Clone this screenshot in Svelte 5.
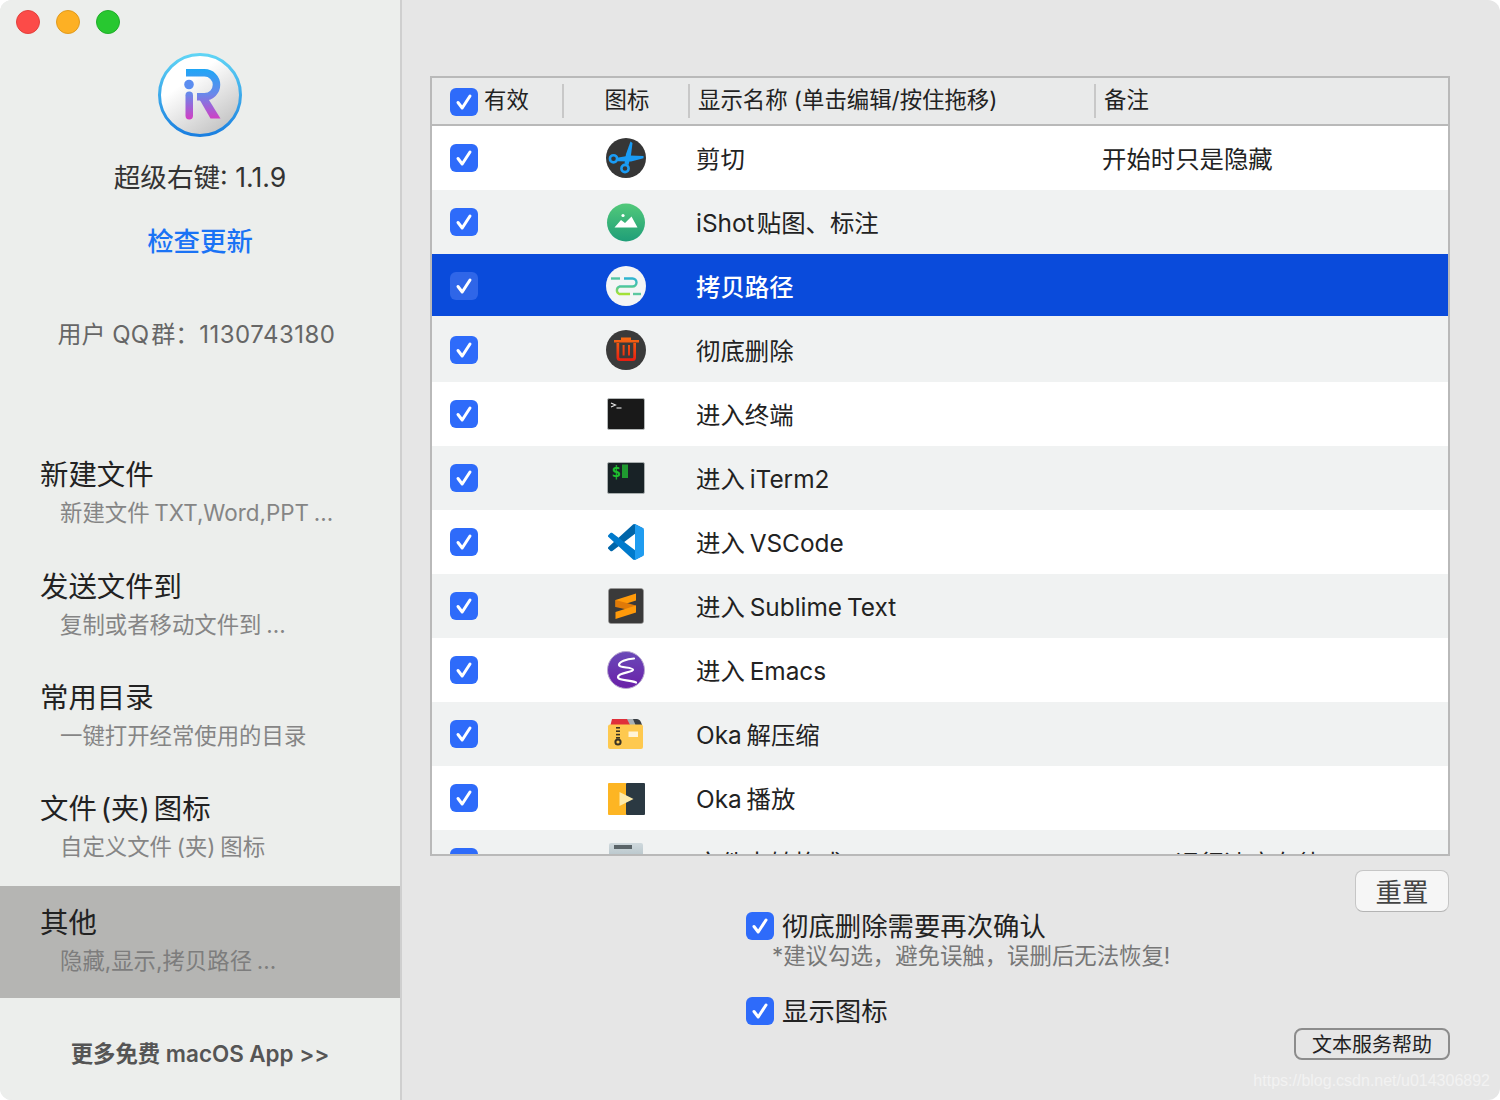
<script>
  const navItems = [
    { title: "新建文件", sub: "新建文件 TXT,Word,PPT ..." },
    { title: "发送文件到", sub: "复制或者移动文件到 ..." },
    { title: "常用目录", sub: "一键打开经常使用的目录" },
    { title: "文件 (夹) 图标", sub: "自定义文件 (夹) 图标" },
    { title: "其他", sub: "隐藏,显示,拷贝路径 ...", active: true },
  ];

  const rows = [
    { icon: "cut", name: "剪切", note: "开始时只是隐藏" },
    { icon: "ishot", name: "iShot\u200a贴图、标注", note: "" },
    { icon: "copypath", name: "拷贝路径", note: "", selected: true },
    { icon: "trash", name: "彻底删除", note: "" },
    { icon: "terminal", name: "进入终端", note: "" },
    { icon: "iterm", name: "进入 iTerm2", note: "" },
    { icon: "vscode", name: "进入 VSCode", note: "" },
    { icon: "sublime", name: "进入 Sublime Text", note: "" },
    { icon: "emacs", name: "进入 Emacs", note: "" },
    { icon: "okazip", name: "Oka 解压缩", note: "" },
    { icon: "okaplay", name: "Oka 播放", note: "" },
    { icon: "disk", name: "文件夹转格式", note: "　　　运行速度有待" },
  ];

  const confirmNote = "*建议勾选\uff0c避免误触\uff0c误删后无法恢复!";
</script>

{#snippet check()}
  <svg class="tick" viewBox="0 0 28 28" aria-hidden="true">
    <path d="M8 14.5 L12.2 20 L20 8" fill="none" stroke="#fff" stroke-width="3" stroke-linecap="round" stroke-linejoin="round" />
  </svg>
{/snippet}

{#snippet appIcon(name)}
  <svg class="app-icon" viewBox="0 0 40 40" aria-hidden="true">
    {#if name === "cut"}
      <circle cx="20" cy="20" r="20" fill="#363636" />
      <path d="M24.5 3.5 L26.5 5 L25 17 L22.5 27 L18.5 25.5 L20 16 Z" fill="#1a9cf5" />
      <path d="M37.5 18 L37.5 20.2 L25 23.5 L12 23.2 L11 19.8 L24 17.5 Z" fill="#1a9cf5" />
      <circle cx="7.5" cy="20.8" r="3.6" fill="none" stroke="#1a9cf5" stroke-width="2.6" />
      <circle cx="19" cy="30.5" r="3.6" fill="none" stroke="#1a9cf5" stroke-width="2.6" />
    {:else if name === "ishot"}
      <defs>
        <linearGradient id="ishot-g" x1="0" y1="0" x2="0" y2="1">
          <stop offset="0" stop-color="#52c97a" />
          <stop offset="1" stop-color="#1f9e78" />
        </linearGradient>
      </defs>
      <circle cx="20" cy="20.5" r="19" fill="url(#ishot-g)" />
      <circle cx="17" cy="13.5" r="1.6" fill="#fff" />
      <path d="M8.5 25.5 L15 18 L19 21 L25.5 14.5 L31.5 25.5 Z" fill="#fff" />
    {:else if name === "copypath"}
      <defs>
        <linearGradient id="path-g" x1="0" y1="0" x2="0" y2="1">
          <stop offset="0" stop-color="#2fb4d0" />
          <stop offset="0.5" stop-color="#4cc6a0" />
          <stop offset="1" stop-color="#a6e234" />
        </linearGradient>
      </defs>
      <circle cx="20" cy="20" r="20" fill="#f4f5f5" />
      <path d="M5 12.5 H14" stroke="#52c4a4" stroke-width="2.4" fill="none" />
      <path d="M18 12.5 H26.5 a4 4 0 0 1 0 8 H13.5 a4 4 0 0 0 0 7.5 H24" stroke="url(#path-g)" stroke-width="2.4" fill="none" />
      <path d="M27 28 H35" stroke="#5cc8a0" stroke-width="2.4" fill="none" />
    {:else if name === "trash"}
      <defs>
        <linearGradient id="trash-g" x1="0" y1="0" x2="0" y2="1">
          <stop offset="0" stop-color="#f56a12" />
          <stop offset="1" stop-color="#ea1c10" />
        </linearGradient>
      </defs>
      <circle cx="20" cy="20" r="20" fill="#3a3a3a" />
      <path fill="url(#trash-g)" d="M15 7.5 H25 V10 H33 V12.4 H8 V10 H15 Z M10.5 13 H13.2 V27 Q13.2 28.3 14.5 28.3 H26 Q27.3 28.3 27.3 27 V13 H30 V27.5 Q30 31 26.5 31 H14 Q10.5 31 10.5 27.5 Z M16.6 15 H18.6 V25.5 H16.6 Z M22 15 H24 V25.5 H22 Z" />
    {:else if name === "terminal"}
      <rect x="1.5" y="4.5" width="37" height="31" rx="1.5" fill="#191919" stroke="#b4b8b8" />
      <path d="M5 9 L9.5 11 L5 13" fill="none" stroke="#e8e8e8" stroke-width="1.1" />
      <path d="M10.5 14 H15.5" stroke="#e8e8e8" stroke-width="1.1" />
    {:else if name === "iterm"}
      <rect x="1.5" y="4.5" width="37" height="31" rx="1.5" fill="#182226" stroke="#a8aeae" />
      <text x="5.5" y="19" class="dollar">$</text>
      <rect x="16" y="6.5" width="6" height="13.5" fill="#1f9a30" />
    {:else if name === "vscode"}
      <g transform="translate(2 2) scale(0.36)">
        <path fill="#0065a9" d="M96.4614 10.7962L75.8569 0.875542C73.4719 -0.272773 70.6217 0.211611 68.75 2.08333L1.29858 63.5832C-0.515693 65.2373 -0.513607 68.0937 1.30308 69.7452L6.81272 74.754C8.29793 76.1042 10.5347 76.2036 12.1338 74.9905L93.3609 13.3699C96.086 11.3026 100 13.2462 100 16.6667V16.4275C100 14.0265 98.6246 11.8378 96.4614 10.7962Z" />
        <path fill="#007acc" d="M96.4614 89.2038L75.8569 99.1245C73.4719 100.273 70.6217 99.7884 68.75 97.9167L1.29858 36.4168C-0.515693 34.7627 -0.513607 31.9063 1.30308 30.2548L6.81272 25.246C8.29793 23.8958 10.5347 23.7964 12.1338 25.0095L93.3609 86.6301C96.086 88.6974 100 86.7538 100 83.3333V83.5725C100 85.9735 98.6246 88.1622 96.4614 89.2038Z" />
        <path fill="#1f9cf0" d="M75.8578 99.1263C73.4721 100.274 70.6219 99.7885 68.75 97.9166C71.0564 100.223 75 98.5895 75 95.3278V4.67213C75 1.41039 71.0564 -0.223106 68.75 2.08329C70.6219 0.211402 73.4721 -0.273666 75.8578 0.873633L96.4587 10.7807C98.6234 11.8217 100 14.0112 100 16.4132V83.5871C100 85.9891 98.6234 88.1786 96.4586 89.2196L75.8578 99.1263Z" />
      </g>
    {:else if name === "sublime"}
      <rect x="2.5" y="2.5" width="35" height="35" rx="2.5" fill="#3a3a3a" stroke="#9a9a9a" stroke-width="0.6" />
      <path d="M9.5 14 L30 7.5 V14.5 L9.5 21 Z" fill="#ff9a0a" />
      <path d="M9.5 21 L30 25.5 L30 19.5 L9.5 14 Z" fill="#e07a08" />
      <path d="M9.5 26 L30 19.5 V26.5 L9.5 33 Z" fill="#ff9a0a" />
    {:else if name === "emacs"}
      <defs>
        <linearGradient id="emacs-g" x1="0" y1="0" x2="0" y2="1">
          <stop offset="0" stop-color="#6a4ab8" />
          <stop offset="1" stop-color="#6a1fa8" />
        </linearGradient>
      </defs>
      <circle cx="20" cy="20" r="18.5" fill="url(#emacs-g)" stroke="#b8a8d0" stroke-width="1" />
      <path d="M28 8.5 C20 9 13 12 13 15 C13 18 27 17 27 19.8 C27 22.5 12 22.5 12 27 C12 31 24 29.5 30 32.5" fill="none" stroke="#fff" stroke-width="2.2" stroke-linecap="round" />
    {:else if name === "okazip"}
      <path d="M21 5 H31 Q34.5 5 36 11 H21 Z" fill="#3a3f44" />
      <path d="M20 5 H27 L29.5 11 H20 Z" fill="#a8b0b4" />
      <path d="M6 5 H21 L24 11 H4.5 Z" fill="#e0303a" />
      <rect x="2" y="10.5" width="35" height="24.5" rx="2" fill="#fec94f" />
      <g fill="#3c3424">
        <rect x="10" y="13" width="4" height="1.6" />
        <rect x="10" y="16.4" width="4" height="1.6" />
        <rect x="10" y="19.8" width="4" height="1.6" />
        <rect x="10" y="23" width="4" height="1.6" />
      </g>
      <circle cx="12" cy="28" r="2.6" fill="none" stroke="#3c3424" stroke-width="2" />
      <rect x="22.5" y="17.5" width="9.5" height="5.5" fill="#fff4d8" />
    {:else if name === "okaplay"}
      <rect x="2" y="5" width="18.5" height="32" rx="1" fill="#fdb523" />
      <rect x="20" y="5" width="19" height="32" rx="1" fill="#2b3942" />
      <path d="M13.5 14 L27.5 21 L13.5 28 Z" fill="#fde9a8" />
    {:else if name === "disk"}
      <defs>
        <linearGradient id="disk-g" x1="0" y1="0" x2="0" y2="1">
          <stop offset="0" stop-color="#cfd9dd" />
          <stop offset="1" stop-color="#8fa2aa" />
        </linearGradient>
      </defs>
      <rect x="3" y="1" width="34" height="38" rx="2" fill="url(#disk-g)" />
      <rect x="8" y="3" width="18" height="4" fill="#5a6468" />
    {/if}
  </svg>
{/snippet}

<div class="window">
  <aside class="sidebar">
    <div class="lights">
      <span class="light red"></span>
      <span class="light amber"></span>
      <span class="light green"></span>
    </div>

    <svg class="logo" viewBox="0 0 84 84" aria-label="超级右键">
      <defs>
        <linearGradient id="logo-ring" x1="0" y1="0" x2="0" y2="1">
          <stop offset="0" stop-color="#5fd4f5" />
          <stop offset="1" stop-color="#1a7fe0" />
        </linearGradient>
        <linearGradient id="logo-face" x1="0.2" y1="0.1" x2="0.8" y2="0.95">
          <stop offset="0.25" stop-color="#ffffff" />
          <stop offset="1" stop-color="#c2c2c2" />
        </linearGradient>
        <linearGradient id="logo-r" gradientUnits="userSpaceOnUse" x1="0" y1="16" x2="0" y2="66">
          <stop offset="0" stop-color="#1ea6f6" />
          <stop offset="0.5" stop-color="#6a88ea" />
          <stop offset="1" stop-color="#d13fc4" />
        </linearGradient>
      </defs>
      <circle cx="42" cy="42" r="40.5" fill="url(#logo-face)" stroke="url(#logo-ring)" stroke-width="3" />
      <path d="M28 19.8 H46.5 a12 12 0 0 1 0 24 H39" fill="none" stroke="url(#logo-r)" stroke-width="7.5" />
      <path d="M39.5 43 H48.5 L62.5 65.5 H52.5 Z" fill="url(#logo-r)" />
      <circle cx="31" cy="31.5" r="4.8" fill="#5c8df0" />
      <rect x="27.5" y="38.5" width="7.5" height="28" rx="3.7" fill="url(#logo-r)" />
    </svg>

    <div class="app-name">超级右键: 1.1.9</div>
    <a class="update" href="#update">检查更新</a>
    <div class="qq">用户 QQ&#8202;群：<span class="qq-num">1130743180</span></div>

    <nav class="nav">
      {#each navItems as item}
        <div class="nav-item" class:active={item.active}>
          <div class="nav-title">{item.title}</div>
          <div class="nav-sub">{item.sub}</div>
        </div>
      {/each}
    </nav>

    <div class="more">更多免费 macOS App &gt;&gt;</div>
  </aside>

  <main class="main">
    <div class="table">
      <div class="head">
        <div class="hcell first">
          <span class="checkbox">{@render check()}</span>
          <span>有效</span>
        </div>
        <div class="hcell center">图标</div>
        <div class="hcell">显示名称 (单击编辑/按住拖移)</div>
        <div class="hcell last">备注</div>
      </div>
      <div class="body">
        {#each rows as row}
          <div class="row" class:selected={row.selected}>
            <div class="cell-check"><span class="checkbox">{@render check()}</span></div>
            <div class="cell-icon">{@render appIcon(row.icon)}</div>
            <div class="cell-text">{row.name}</div>
            <div class="cell-text">{row.note}</div>
          </div>
        {/each}
      </div>
    </div>

    <button class="reset">重置</button>

    <div class="options">
      <label class="option">
        <span class="checkbox">{@render check()}</span>
        <span class="option-label">彻底删除需要再次确认</span>
      </label>
      <div class="option-note">{confirmNote}</div>
      <label class="option second">
        <span class="checkbox">{@render check()}</span>
        <span class="option-label">显示图标</span>
      </label>
    </div>

    <button class="help">文本服务帮助</button>
    <div class="watermark">https://blog.csdn.net/u014306892</div>
  </main>
</div>

<style>
  :global(body) {
    background: #fff;
  }

  .window {
    display: flex;
    position: relative;
    width: 1500px;
    height: 1100px;
    overflow: hidden;
    border-radius: 12px;
    background: #e6e6e6;
    font-family: Inter, "Noto Sans CJK SC", sans-serif;
    color: #222;
  }

  /* sidebar */
  .sidebar {
    display: flex;
    flex-direction: column;
    align-items: center;
    flex: none;
    width: 400px;
    background: #eceeec;
    border-right: 2px solid #cfcfcf;
  }
  .lights {
    display: flex;
    gap: 16px;
    align-self: flex-start;
    padding: 10px 16px 0;
  }
  .light {
    width: 24px;
    height: 24px;
    border-radius: 50%;
    box-sizing: border-box;
    border: 1px solid transparent;
  }
  .light.red { background: #fc4b48; border-color: #e2403c; }
  .light.amber { background: #fdb024; border-color: #e09a1e; }
  .light.green { background: #28c830; border-color: #20ad2a; }

  .logo {
    width: 84px;
    height: 84px;
    margin-top: 19px;
  }
  .app-name {
    margin-top: 22px;
    font-size: 26.6px;
    line-height: 36px;
    color: #333;
  }
  .update {
    margin-top: 28px;
    font-size: 26.4px;
    line-height: 36px;
    font-weight: 500;
    color: #1a73f5;
    text-decoration: none;
  }
  .qq {
    margin-top: 58px;
    margin-right: 7px;
    font-size: 24px;
    line-height: 36px;
    color: #666;
  }
  .qq-num {
    letter-spacing: 0.5px;
  }
  .nav {
    align-self: stretch;
    margin-top: 85px;
  }
  .nav-item {
    height: 112px;
    box-sizing: border-box;
    padding-top: 19px;
  }
  .nav-item:nth-child(2),
  .nav-item:nth-child(3) {
    height: 111px;
  }
  .nav-item:nth-child(4) {
    height: 114px;
  }
  .nav-item.active {
    background: #b5b5b3;
  }
  .nav-title {
    padding-left: 40px;
    font-size: 28.4px;
    line-height: 36px;
    word-spacing: -4px;
    color: #222;
  }
  .nav-sub {
    margin-top: 4px;
    padding-left: 60px;
    font-size: 22.4px;
    line-height: 32px;
    word-spacing: -1.5px;
    color: #858585;
  }
  .active .nav-sub {
    color: #7d7d7d;
  }
  .more {
    margin-top: 40px;
    font-size: 22.4px;
    line-height: 32px;
    font-weight: 600;
    color: #555;
  }

  /* main pane */
  .main {
    display: flex;
    flex-direction: column;
    flex: 1;
    min-width: 0;
    padding: 76px 50px 0 28px;
  }
  .table {
    height: 780px;
    box-sizing: border-box;
    border: 2px solid #b9b9b9;
    overflow: hidden;
    flex: none;
  }
  .head,
  .row {
    display: grid;
    grid-template-columns: 132px 126px 406px 1fr;
    align-items: center;
  }
  .head {
    height: 48px;
    box-sizing: border-box;
    border-bottom: 2px solid #b9b9b9;
    background: #e9eaea;
    font-size: 22.4px;
  }
  .hcell {
    display: flex;
    align-items: center;
    height: 34px;
    padding: 0 0 6px 8px;
    border-right: 2px solid #c8c8c8;
    box-sizing: border-box;
    color: #222;
  }
  .hcell.first {
    gap: 6px;
    padding-left: 18px;
  }
  .hcell.first .checkbox {
    margin-top: 8px;
  }
  .hcell.center {
    justify-content: center;
    padding-left: 2px;
  }
  .hcell.last {
    border-right: none;
  }
  .row {
    height: 64px;
    box-sizing: border-box;
    background: #fff;
    font-size: 24.4px;
    word-spacing: -2px;
  }
  .row:nth-child(even) {
    background: #f0f2f2;
  }
  .row.selected {
    padding-top: 2px;
    background: #0a4bdb;
    background-clip: padding-box;
    border-bottom: 2px solid #f0f2f2;
    color: #fff;
    font-weight: 500;
  }
  .cell-check {
    padding-left: 18px;
    display: flex;
  }
  .cell-icon {
    display: flex;
    padding-left: 42px;
  }
  .cell-text {
    padding: 0 0 2px 6px;
    white-space: nowrap;
  }
  .app-icon {
    display: block;
    width: 40px;
    height: 40px;
  }
  .dollar {
    font-family: "DejaVu Sans Mono", monospace;
    font-size: 16px;
    font-weight: 700;
    fill: #1fc02f;
  }

  .checkbox {
    display: block;
    flex: none;
    width: 28px;
    height: 28px;
    border-radius: 6px;
    background: #2e6bfa;
  }
  .selected .checkbox {
    background: #2f66e8;
  }
  .tick {
    display: block;
    width: 28px;
    height: 28px;
  }

  .reset {
    align-self: flex-end;
    width: 94px;
    height: 42px;
    margin: 14px 1px 0 0;
    padding: 1px 0 0;
    border: 1px solid #c6c6c6;
    border-bottom-color: #b4b4b4;
    border-radius: 8px;
    background: #f6f6f6;
    font-family: inherit;
    font-size: 26.4px;
    line-height: 36px;
    color: #444;
  }
  .options {
    padding-left: 316px;
  }
  .option {
    display: flex;
    align-items: center;
    gap: 8px;
    height: 28px;
    font-size: 26.4px;
    color: #222;
  }
  .option-label {
    margin-top: -3px;
  }
  .option.second {
    margin-top: 25px;
  }
  .option-note {
    margin-left: 26px;
    font-size: 22.4px;
    line-height: 32px;
    color: #777;
  }
  .help {
    align-self: flex-end;
    width: 156px;
    height: 32px;
    margin-top: 3px;
    padding: 2px 0 0;
    border: 2px solid #8c8c8c;
    border-radius: 8px;
    background: transparent;
    font-family: inherit;
    font-size: 20px;
    line-height: 26px;
    color: #222;
  }
  .watermark {
    position: absolute;
    right: 10px;
    bottom: 8px;
    font-family: "Liberation Sans", sans-serif;
    font-size: 16px;
    line-height: 22px;
    color: #f2f2f2;
  }
</style>
